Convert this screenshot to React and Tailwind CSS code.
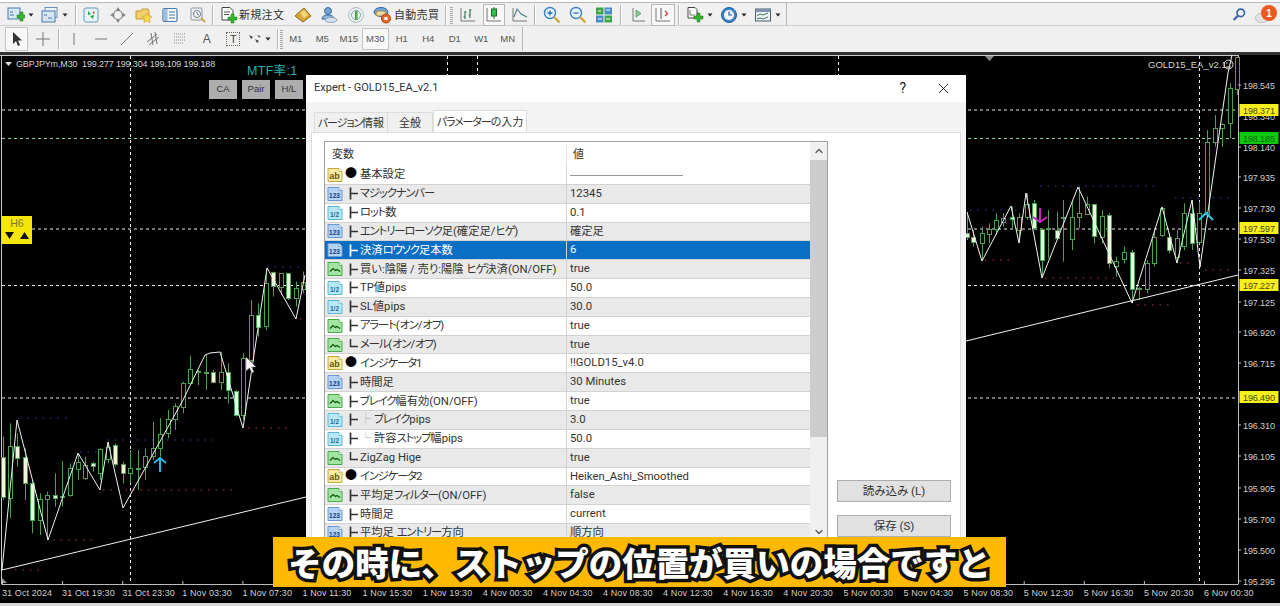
import React from 'react';
import { X, ChevronUp, ChevronDown } from 'lucide-react';

// candle rows: x, wick top, wick bottom, body top, body bottom, filled (zoomed coords, 3x)
const leftCandles = [
  [8, 710, 900, 770, 890, 1], [30, 670, 955, 737, 892, 0], [52, 700, 800, 738, 775, 1], [75, 745, 900, 772, 850, 1],
  [97, 840, 1000, 850, 962, 1], [120, 880, 1005, 897, 960, 0], [142, 875, 1020, 886, 898, 0], [165, 820, 920, 885, 893, 1],
  [187, 783, 920, 888, 892, 1], [210, 790, 890, 805, 885, 0], [233, 760, 840, 785, 805, 0], [256, 770, 840, 795, 835, 0],
  [278, 785, 815, 790, 798, 1], [300, 745, 840, 747, 820, 0], [323, 725, 790, 740, 775, 0], [346, 730, 800, 735, 793, 1],
  [368, 785, 850, 793, 820, 1], [390, 750, 850, 805, 820, 0], [413, 750, 870, 803, 806, 0], [436, 745, 840, 767, 800, 0],
  [458, 665, 780, 745, 768, 0], [481, 655, 770, 703, 745, 0], [503, 630, 715, 657, 700, 0], [526, 610, 690, 617, 657, 0],
  [549, 545, 640, 548, 620, 0], [571, 467, 550, 508, 550, 0], [594, 510, 555, 512, 516, 0], [617, 465, 570, 515, 517, 0],
  [640, 510, 550, 515, 545, 1], [662, 455, 570, 517, 547, 0], [685, 490, 610, 517, 572, 1], [708, 570, 650, 573, 645, 1],
  [730, 460, 660, 475, 645, 0], [753, 300, 490, 345, 480, 0], [775, 310, 410, 345, 380, 1], [798, 205, 390, 250, 380, 0],
  [820, 215, 290, 217, 260, 1], [843, 220, 285, 220, 262, 0], [865, 220, 300, 220, 295, 1], [888, 245, 320, 265, 295, 0],
  [910, 215, 280, 245, 265, 0],
];

const rightCandles = [
  [22, 490, 570, 548, 560, 1], [40, 540, 590, 562, 578, 1], [65, 530, 632, 550, 580, 0], [87, 520, 580, 538, 552, 0],
  [108, 490, 555, 510, 538, 0], [130, 490, 530, 503, 515, 0], [155, 470, 540, 502, 508, 1], [176, 490, 575, 500, 540, 0],
  [200, 430, 510, 462, 500, 0], [221, 450, 540, 460, 535, 1], [245, 535, 680, 538, 630, 1], [265, 480, 625, 535, 536, 0],
  [290, 485, 570, 540, 565, 1], [310, 450, 635, 500, 502, 0], [335, 450, 600, 500, 565, 0], [357, 410, 535, 490, 503, 0],
  [380, 440, 495, 463, 493, 0], [403, 465, 580, 463, 558, 1], [425, 480, 580, 497, 560, 0], [448, 490, 655, 495, 640, 1],
  [468, 620, 680, 632, 648, 0], [492, 590, 640, 607, 628, 0], [515, 600, 760, 607, 718, 1], [538, 710, 750, 715, 717, 0],
  [560, 630, 730, 640, 717, 0], [583, 540, 650, 562, 640, 0], [605, 470, 560, 475, 555, 0], [628, 550, 610, 560, 600, 1],
  [650, 540, 640, 563, 620, 0], [673, 460, 600, 490, 590, 0], [695, 450, 600, 490, 580, 1], [718, 455, 580, 488, 575, 0],
  [741, 240, 500, 275, 490, 0], [764, 195, 290, 235, 278, 0], [787, 220, 290, 222, 235, 0], [809, 100, 265, 115, 220, 0],
  [830, 20, 135, 20, 115, 0],
];

const leftZig = '2,570 17,420 48,540 78,453 100,490 108,442 123,508 183,400 205,355 210,353 220,352 243,428 267,268 296,319 305,275';
const rightZig = '967,212 982,261 1011,206 1019,243 1026,193 1042,278 1078,187 1132,303 1162,207 1177,263 1192,200 1200,267 1228,73 1232,55';

const prices = [
  ['198.545', 85], ['198.340', 116], ['198.140', 147], ['197.935', 177], ['197.730', 208], ['197.530', 239],
  ['197.325', 270], ['197.125', 302], ['196.920', 332], ['196.715', 363], ['196.310', 425], ['196.105', 456],
  ['195.905', 488], ['195.700', 519], ['195.500', 550], ['195.295', 581],
];

const priceTags = [
  ['198.371', 110, '#f7ee1e'], ['198.185', 138, '#10c810'], ['197.597', 228, '#f7ee1e'], ['197.227', 285, '#f7ee1e'], ['196.490', 397, '#f7ee1e'],
];

const times = [
  '31 Oct 2024', '31 Oct 19:30', '31 Oct 23:30', '1 Nov 03:30', '1 Nov 07:30', '1 Nov 11:30', '1 Nov 15:30', '1 Nov 19:30',
  '4 Nov 00:30', '4 Nov 04:30', '4 Nov 08:30', '4 Nov 12:30', '4 Nov 16:30', '4 Nov 20:30', '5 Nov 00:30', '5 Nov 04:30',
  '5 Nov 08:30', '5 Nov 12:30', '5 Nov 16:30', '5 Nov 20:30', '6 Nov 00:30',
];

const navyDots = [[20, 70, 418], [107, 213, 440], [80, 100, 452], [267, 305, 267], [970, 1030, 210], [1040, 1155, 186], [1175, 1230, 198]];
const redDots = [[15, 42, 570], [53, 95, 540], [103, 237, 490], [248, 290, 428], [300, 305, 319], [985, 1012, 260], [1045, 1115, 278], [1137, 1170, 305], [1180, 1192, 263], [1205, 1235, 270]];

const rows = [
  ['ab', 'dot', '基本設定', '——————————'],
  ['int', 'mid', 'マジックナンバー', '12345'],
  ['dbl', 'mid', 'ロット数', '0.1'],
  ['int', 'mid', 'エントリーローソク足(確定足/ヒゲ)', '確定足'],
  ['int', 'mid', '決済ロウソク足本数', '6'],
  ['bool', 'mid', '買い:陰陽 / 売り:陽陰 ヒゲ決済(ON/OFF)', 'true'],
  ['dbl', 'mid', 'TP値pips', '50.0'],
  ['dbl', 'mid', 'SL値pips', '30.0'],
  ['bool', 'mid', 'アラート(オン/オフ)', 'true'],
  ['bool', 'end', 'メール(オン/オフ)', 'true'],
  ['ab', 'dot', 'インジケータ1', '!!GOLD15_v4.0'],
  ['int', 'mid', '時間足', '30 Minutes'],
  ['bool', 'mid', 'ブレイク幅有効(ON/OFF)', 'true'],
  ['dbl', 'mid', 'ブレイクpips', '3.0', '├'],
  ['dbl', 'mid', '許容ストップ幅pips', '50.0', '└'],
  ['bool', 'end', 'ZigZag Hige', 'true'],
  ['ab', 'dot', 'インジケータ2', 'Heiken_Ashi_Smoothed'],
  ['bool', 'mid', '平均足フィルター(ON/OFF)', 'false'],
  ['int', 'mid', '時間足', 'current'],
  ['int', 'mid', '平均足 エントリー方向', '順方向'],
];

const typeColors = {
  ab: ['#f8eca0', '#c2a84a', '#6a5410', 'ab'],
  int: ['#b4d2f2', '#6c9ad0', '#123e8c', '123'],
  dbl: ['#b6e8f6', '#62b4d4', '#1a6a9a', '1/2'],
  bool: ['#a4e4a4', '#4ea84e', '#0c5a0c', ''],
};

// the dialog's UI font sets katakana much narrower than its kanji
function Kana({ text }) {
  return text.split(/([\u30A0-\u30FF]+)/).map((part, i) => (
    i % 2 ? <span key={i} className="tracking-[-1.1px]">{part}</span> : part
  ));
}

function TypeIcon({ type }) {
  const [bg, line, ink, label] = typeColors[type];
  return (
    <svg width="16" height="16" viewBox="0 0 16 16" className="shrink-0">
      <path d="M1 1.500h11l3 3v10H1z" fill={bg} stroke={line} />
      <path d="M12 1.500v3h3" fill="#fff" stroke={line} strokeWidth="0.700" />
      {label ? (
        <text x="7.500" y="11.500" textAnchor="middle" fontSize={type === 'ab' ? 9 : 6.500} fontWeight="700" fontFamily="Liberation Sans" fill={ink}>{label}</text>
      ) : (
        <path d="M3 10.500l3-3 2.500 2 1.500-1 3 2" fill="none" stroke={ink} strokeWidth="1.300" />
      )}
    </svg>
  );
}

function Arrow() {
  return (
    <svg width="10" height="8" viewBox="0 0 10 8" className="shrink-0">
      <path d="M2.500 2.500h5L5 5.500z" fill="#222" />
    </svg>
  );
}

const Sep = ({ className = '' }) => <div className={`w-[2px] h-[20px] bg-[#b4b4b4] border-r border-white shrink-0 ${className}`} />;

function Slot({ className = '', children }) {
  return <div className={`w-[20px] h-[20px] flex items-center justify-center shrink-0 ${className}`}>{children}</div>;
}

function Ic({ children }) {
  return <svg width="18" height="18" viewBox="0 0 18 18" className="shrink-0">{children}</svg>;
}

const Plus = () => <path d="M10 9h3V6h3v3h2v3h-2v3h-3v-3h-3z" fill="#35b52e" stroke="#1b7a18" strokeWidth="0.500" />;

const icons = {
  newChart: <Ic><rect x="1" y="2" width="12" height="11" fill="#d8e8f6" stroke="#4a78a8" /><path d="M3 6h3M3 9h4" stroke="#4a78a8" /><Plus /></Ic>,
  profiles: <Ic><rect x="4" y="1.500" width="12" height="10" fill="#eaf2fa" stroke="#6c8fb2" /><rect x="1" y="5" width="13" height="11" fill="#d6e6f5" stroke="#4a78a8" /><path d="M3 9h3M7 12h4" stroke="#4a78a8" /></Ic>,
  market: <Ic><rect x="2" y="2" width="14" height="14" rx="2" fill="#e8f4fb" stroke="#5d98c4" /><path d="M6 5l3 3-3 1zM12 9l-1 4-3-3z" fill="#2aa535" /><path d="M11 5l2 2-2 1z" fill="#d83a2a" /></Ic>,
  cross: <Ic><path d="M9 1l2 3H7zM9 17l-2-3h4zM1 9l3-2v4zM17 9l-3 2V7z" fill="#8c8c8c" /><circle cx="9" cy="9" r="4.500" fill="none" stroke="#777" strokeWidth="1.200" /></Ic>,
  folder: <Ic><path d="M1 5h5l1-2h6l1 2v8H1z" fill="#f4cf6a" stroke="#c09a35" /><path d="M12 7l1.500 3 3.500.5-2.500 2.500.6 3.500-3.100-1.700-3.100 1.700.6-3.500L7 10.500l3.500-.5z" fill="#f8d94a" stroke="#c8a02a" strokeWidth="0.600" /></Ic>,
  nav: <Ic><rect x="2" y="2.500" width="14" height="13" rx="1.500" fill="#f2f7fc" stroke="#4a78a8" strokeWidth="1.200" /><rect x="2.500" y="3" width="4" height="12" fill="#9cc0e4" /><path d="M8 6h6M8 9h6M8 12h6" stroke="#4a78a8" /></Ic>,
  tester: <Ic><rect x="2" y="2" width="11" height="12" rx="1" fill="#eef1f4" stroke="#8a94a0" /><circle cx="8" cy="8" r="3.500" fill="#fff" stroke="#6c7884" /><path d="M8 6v2l2 1" stroke="#6c7884" fill="none" /><path d="M12 12l4 4" stroke="#c8a64a" strokeWidth="2" /></Ic>,
  order: <Ic><path d="M2 1.500h8l3 3V14H2z" fill="#fff" stroke="#444" /><path d="M4 6h6M4 8.500h5" stroke="#555" /><path d="M8 11h3V8h3v3h3v3h-3v3h-3v-3H8z" fill="#35b52e" stroke="#1b7a18" strokeWidth="0.500" /></Ic>,
  gold: <Ic><path d="M1 10l9-8 7 8-8 6z" fill="#d8a93a" stroke="#8c6a18" /><path d="M6 7l4-3 4 5-4 3z" fill="#f3d77a" /></Ic>,
  people: <Ic><circle cx="8" cy="5" r="3.500" fill="#6fa4d8" stroke="#34689c" /><path d="M2 13c0-3 3-4 6-4s6 1 6 4z" fill="#8ab8e2" stroke="#34689c" /><ellipse cx="11" cy="14" rx="6" ry="2.500" fill="#d5e2ee" stroke="#8ea4b8" /></Ic>,
  signal: <Ic><circle cx="9" cy="9" r="7.500" fill="#eef3ee" stroke="#b0bcc0" /><circle cx="9" cy="9" r="4.500" fill="none" stroke="#7fa4c0" /><rect x="8" y="5" width="2.500" height="9" fill="#4aa84a" /></Ic>,
  auto: <Ic><ellipse cx="8" cy="6" rx="7" ry="4.500" fill="#6ea6d8" stroke="#34689c" /><rect x="3" y="5" width="10" height="5" rx="2" fill="#e8d8a8" stroke="#9a8648" /><circle cx="13" cy="12.500" r="4.500" fill="#e8662a" stroke="#a83e10" /><circle cx="13" cy="12.500" r="1.800" fill="#fff" /></Ic>,
  bars: <Ic><path d="M2 2v13h14" fill="none" stroke="#777" /><path d="M6 5v8M4.500 11H6M6 6h1.500M11 3v9M9.500 9H11M11 4h1.500" stroke="#3a7a5a" strokeWidth="1.200" fill="none" /></Ic>,
  candles: <Ic><path d="M2 2v13h14" fill="none" stroke="#777" /><path d="M9 1v12" stroke="#2a7a3a" /><rect x="6.500" y="3" width="5" height="7" fill="#35c04a" stroke="#1c6a2c" /></Ic>,
  line: <Ic><path d="M2 2v13h14" fill="none" stroke="#777" /><path d="M3 11l3-8 4 5 6 3" fill="none" stroke="#4a7a8c" strokeWidth="1.100" /></Ic>,
  zoomIn: <Ic><circle cx="7" cy="7" r="5.500" fill="#e4f2fc" stroke="#3a82c4" strokeWidth="1.400" /><path d="M4.500 7h5M7 4.500v5" stroke="#2a6ab0" strokeWidth="1.300" /><path d="M11 11l5.500 5.500" stroke="#d0a83a" strokeWidth="2.400" /></Ic>,
  zoomOut: <Ic><circle cx="7" cy="7" r="5.500" fill="#e4f2fc" stroke="#3a82c4" strokeWidth="1.400" /><path d="M4.500 7h5" stroke="#2a6ab0" strokeWidth="1.300" /><path d="M11 11l5.500 5.500" stroke="#d0a83a" strokeWidth="2.400" /></Ic>,
  grid: <Ic><rect x="1" y="1.500" width="7.500" height="7" fill="#3ea64a" /><rect x="9.500" y="1.500" width="7.500" height="7" fill="#4a8cc8" /><rect x="1" y="9.500" width="7.500" height="7" fill="#4a8cc8" /><rect x="9.500" y="9.500" width="7.500" height="7" fill="#3ea64a" /><path d="M3 5h3M11 4h4M3 13h4M11 13h4" stroke="#fff" /></Ic>,
  shift: <Ic><path d="M4 2v13h12" fill="none" stroke="#777" /><path d="M7 4l5 3.500L7 11z" fill="#8ccf98" stroke="#3a8a4a" strokeWidth="0.700" /></Ic>,
  scroll: <Ic><path d="M2 2v13h14" fill="none" stroke="#777" /><path d="M7 2v11" stroke="#555" /><path d="M11 5l2.500 2.500L11 10" fill="none" stroke="#d83a3a" strokeWidth="1.200" /></Ic>,
  addChart: <Ic><path d="M2 1.500h7l2 2V12H2z" fill="#fff" stroke="#444" /><path d="M4 4v5h5" fill="none" stroke="#777" /><path d="M8 10h3V7h3v3h3v3h-3v3h-3v-3H8z" fill="#35b52e" stroke="#1b7a18" strokeWidth="0.500" /></Ic>,
  clock: <Ic><circle cx="9" cy="9" r="7.500" fill="#3c86c8" stroke="#1e5a98" /><circle cx="9" cy="9" r="5" fill="#f2f6fa" /><path d="M9 5.500V9h3" fill="none" stroke="#1e5a98" strokeWidth="1.200" /></Ic>,
  template: <Ic><rect x="1.500" y="3" width="15" height="12" fill="#eef2f6" stroke="#4a5a6c" /><rect x="1.500" y="3" width="15" height="3" fill="#7a92aa" /><path d="M3 10l3-2 3 1 5-2M3 13l3-1 3 1 5-2" fill="none" stroke="#3a7a5a" /></Ic>,
};

function DrawIcon({ d, children }) {
  return (
    <svg width="16" height="16" viewBox="0 0 16 16" className="shrink-0">
      {d && <path d={d} fill="none" stroke="#777" />}
      {children}
    </svg>
  );
}

function Toolbars() {
  return (
    <div className="shrink-0 h-[52px] bg-[#f0f0f0] font-['Noto_Sans_CJK_JP',sans-serif] text-[#333] relative">
      <div className="h-[3px] border-b border-[#b8b8b8] bg-white" />
      <div className="flex items-center h-[23px] pt-[1px] pl-[6px] border-b border-[#cfcfcf]">
        <Slot>{icons.newChart}</Slot><div className="w-[10px] flex"><Arrow /></div>
        <Slot className="ml-[4px]">{icons.profiles}</Slot><div className="w-[10px] flex"><Arrow /></div>
        <Sep className="ml-[5px]" />
        <Slot className="ml-[4px]">{icons.market}</Slot>
        <Slot className="ml-[7px]">{icons.cross}</Slot>
        <Slot className="ml-[6px]">{icons.folder}</Slot>
        <Slot className="ml-[6px]">{icons.nav}</Slot>
        <Slot className="ml-[8px]">{icons.tester}</Slot>
        <Sep className="ml-[4px]" />
        <Slot className="ml-[5px]">{icons.order}</Slot>
        <div className="w-[45px] text-[11px] tracking-[0.3px] whitespace-nowrap">新規注文</div>
        <Slot className="ml-[9px]">{icons.gold}</Slot>
        <Slot className="ml-[6px]">{icons.people}</Slot>
        <Slot className="ml-[7px]">{icons.signal}</Slot>
        <Slot className="ml-[6px]">{icons.auto}</Slot>
        <div className="ml-[2px] w-[45px] text-[11px] tracking-[0.3px] whitespace-nowrap">自動売買</div>
        <Sep className="ml-[6px]" />
        <div className="ml-[3px] w-[3px] h-[18px] bg-[repeating-linear-gradient(0deg,#a8a8a8_0,#a8a8a8_1px,#f0f0f0_1px,#f0f0f0_2px)]" />
        <Slot className="ml-[5px]">{icons.bars}</Slot>
        <Slot className="ml-[5px] w-[22px] h-[22px] bg-[#f8f8f8] border border-[#b8b8b8]">{icons.candles}</Slot>
        <Slot className="ml-[5px]">{icons.line}</Slot>
        <Sep className="ml-[4px]" />
        <Slot className="ml-[6px]">{icons.zoomIn}</Slot>
        <Slot className="ml-[6px]">{icons.zoomOut}</Slot>
        <Slot className="ml-[6px]">{icons.grid}</Slot>
        <Sep className="ml-[6px]" />
        <Slot className="ml-[6px]">{icons.shift}</Slot>
        <Slot className="ml-[3px] w-[24px] h-[22px] bg-[#f8f8f8] border border-[#b8b8b8]">{icons.scroll}</Slot>
        <Sep className="ml-[3px]" />
        <Slot className="ml-[5px]">{icons.addChart}</Slot><div className="w-[10px] flex"><Arrow /></div>
        <Slot className="ml-[4px]">{icons.clock}</Slot><div className="w-[10px] flex"><Arrow /></div>
        <Slot className="ml-[4px]">{icons.template}</Slot><div className="w-[10px] flex"><Arrow /></div>
        <div className="ml-[3px] w-[1px] h-[23px] bg-[#b8b8b8]" />
      </div>
      <div className="flex items-center h-[26px] pl-[5px] font-['Liberation_Sans',sans-serif] text-[9.5px] text-[#555]">
        <div className="w-[23px] h-[24px] bg-[#f8f8f8] border border-[#c4c4c4] flex items-center justify-center">
          <svg width="12" height="16" viewBox="0 0 12 16"><path d="M2 1v12l3-3 2 5 2-1-2-4.500h4z" fill="#333" /></svg>
        </div>
        <div className="ml-[2px] w-[26px] flex justify-center"><DrawIcon d="M8 1v14M1 8h14" /></div>
        <Sep className="ml-[2px]" />
        <div className="w-[1px]" />
        <div className="w-[26.500px] flex justify-center"><DrawIcon d="M8 2v12" /></div>
        <div className="w-[26.500px] flex justify-center"><DrawIcon d="M2 8h12" /></div>
        <div className="w-[26.500px] flex justify-center"><DrawIcon d="M2 14L14 2" /></div>
        <div className="w-[26.500px] flex justify-center">
          <DrawIcon d="M1 11L11 3M3 14L13 6M5 2l2 12M9 1l2 12" />
        </div>
        <div className="w-[26.500px] flex justify-center">
          <DrawIcon><path d="M2 3h12M2 6h12M2 9h12M2 12h10" stroke="#888" strokeDasharray="1 1" /></DrawIcon>
        </div>
        <div className="w-[26.500px] flex justify-center font-['Liberation_Sans'] text-[12px] text-[#555]">A</div>
        <div className="w-[26.500px] flex justify-center">
          <div className="w-[14px] h-[14px] border border-dotted border-[#666] flex items-center justify-center text-[11px] text-[#444]">T</div>
        </div>
        <div className="w-[16px] flex justify-center">
          <DrawIcon><path d="M2 4l4 2-2 2zM8 8l4 2-2 2z" fill="#444" /><path d="M10 4l4 1-2 2z" fill="#777" /></DrawIcon>
        </div>
        <div className="w-[10px] flex"><Arrow /></div>
        <div className="w-[4px]" />
        <Sep />
        <div className="ml-[1px] w-[3px] h-[20px] bg-[repeating-linear-gradient(0deg,#a8a8a8_0,#a8a8a8_1px,#f0f0f0_1px,#f0f0f0_2px)]" />
        {['M1', 'M5', 'M15', 'M30', 'H1', 'H4', 'D1', 'W1', 'MN'].map((tf) => (
          <div key={tf} className={`w-[26.500px] h-[22px] flex items-center justify-center ${tf === 'M30' ? 'bg-[#f8f8f8] border border-[#c4c4c4]' : ''}`}>{tf}</div>
        ))}
        <div className="ml-[1px] w-[1px] h-[24px] bg-[#b8b8b8]" />
      </div>
      {/* search and notification, top right */}
      <svg width="15" height="15" viewBox="0 0 18 18" className="absolute left-[1232px] top-[7px]">
        <circle cx="10.500" cy="7" r="4.500" fill="#eef5fc" stroke="#3a64a8" strokeWidth="2" />
        <path d="M7 10.500l-5 5" stroke="#3a64a8" strokeWidth="2.600" />
      </svg>
      <div className="absolute left-[1255px] top-[13px] w-[14px] h-[10px] rounded-full bg-[#e2e2e2] border border-[#c4c4c4]" />
      <div className="absolute left-[1261px] top-[5px] w-[16px] h-[16px] rounded-full bg-[#e85a20] text-white text-[10px] font-bold flex items-center justify-center font-['Liberation_Sans']">1</div>
    </div>
  );
}

function Candles({ data, ox, oy }) {
  return data.map(([x, wt, wb, bt, bb, filled]) => {
    const cx = Math.round(ox + x / 3) + 0.5;
    const top = Math.round(oy + bt / 3) + 0.5;
    const h = Math.max(1, Math.round((bb - bt) / 3));
    return (
      <g key={x} stroke="#4f9f52">
        <line x1={cx} x2={cx} y1={oy + wt / 3} y2={oy + wb / 3} />
        <rect x={cx - 2} y={top} width="4" height={h} fill={filled ? '#e6fbdc' : '#000'} />
      </g>
    );
  });
}

function ChartSvg() {
  const font = 'Liberation Sans, sans-serif';
  return (
    <svg width="1280" height="548" viewBox="0 55 1280 548" className="block absolute inset-0">
      <rect x="0" y="55" width="1280" height="548" fill="#000" />
      <path d="M1.500 55v529M0 55.500h1238" stroke="#c8c8c8" fill="none" />
      <path d="M1238.500 55v529M1.500 584.500h1237" stroke="#bdbdbd" fill="none" />

      {[110, 229, 285.500, 398].map((y) => (
        <line key={y} x1="2" x2="1238" y1={y} y2={y} stroke="#e8e8e8" strokeDasharray="3 3" />
      ))}
      <line x1="2" x2="1238" y1="138.500" y2="138.500" stroke="#9ad09a" strokeDasharray="3 3" />
      {[130.500, 447.500, 477.500, 838.500, 1199.500].map((x) => (
        <line key={x} x1={x} x2={x} y1="56" y2="584" stroke="#eee" strokeDasharray="3 3" />
      ))}

      {navyDots.map(([a, b, y]) => (
        <line key={`n${a}`} x1={a} x2={b} y1={y} y2={y} stroke="#1c2a78" strokeWidth="1.500" strokeDasharray="1.500 6" />
      ))}
      {redDots.map(([a, b, y]) => (
        <line key={`r${a}`} x1={a} x2={b} y1={y} y2={y} stroke="#7c2424" strokeWidth="1.500" strokeDasharray="1.500 6" />
      ))}

      <Candles data={leftCandles} ox={0} oy={200} />
      <Candles data={rightCandles} ox={960} oy={50} />

      <polyline points={leftZig} fill="none" stroke="#f2f2f2" />
      <polyline points={rightZig} fill="none" stroke="#f2f2f2" />
      <line x1="2" y1="570" x2="306" y2="497" stroke="#f0f0f0" />
      <line x1="966" y1="341" x2="1238" y2="275" stroke="#f0f0f0" />

      <path d="M160 472v-14M154 463l6-5 6 5" fill="none" stroke="#29b6e8" strokeWidth="2" />
      <path d="M1040 208v14M1033 217l7 5 7-5" fill="none" stroke="#d020c0" strokeWidth="2" />
      <path d="M1199 220l7-7 7 7" fill="none" stroke="#29c8e8" strokeWidth="2" />
      <path d="M246 357v14l3.500-3 2.500 5 2-1-2.500-5h4.500z" fill="#fff" stroke="#555" strokeWidth="0.500" />

      <path d="M5 62h7l-3.500 4z" fill="#ddd" />
      <path d="M985 56h9l-4.500 5z" fill="#8c8c8c" />
      <path d="M2 583v-5l5 5z" fill="#999" />
      <text x="16" y="66.500" fontFamily={font} fontSize="9" letterSpacing="-0.150" fill="#d4d4d4" xmlSpace="preserve">GBPJPYm,M30  199.277 199.304 199.109 199.188</text>
      <text x="1148" y="67.500" fontFamily={font} fontSize="9.500" fill="#d4d4d4">GOLD15_EA_v2.1</text>
      <circle cx="1228.500" cy="64.500" r="4.500" fill="none" stroke="#ddd" />
      <path d="M1226 63h1.500M1230 63h1.500M1226 67h5" stroke="#ddd" fill="none" />

      {prices.map(([p, y]) => (
        <g key={p}>
          <line x1="1238" x2="1241" y1={y} y2={y} stroke="#bdbdbd" />
          <text x="1243" y={y + 3.500} fontFamily={font} fontSize="9" letterSpacing="-0.100" fill="#cfcfcf">{p}</text>
        </g>
      ))}
      {priceTags.map(([p, y, bg]) => (
        <g key={p}>
          <rect x="1239.500" y={y - 6} width="39" height="12" fill={bg} />
          <text x="1243" y={y + 3.500} fontFamily={font} fontSize="9" letterSpacing="-0.100" fill={bg === '#10c810' ? '#0a6a0a' : '#4a4a10'}>{p}</text>
        </g>
      ))}
      {times.map((t, i) => (
        <g key={t}>
          <line x1={2.500 + i * 60.100} x2={2.500 + i * 60.100} y1="581" y2="585" stroke="#bdbdbd" />
          <text x={2 + i * 60.100} y="595.500" fontFamily={font} fontSize="9" letterSpacing="0.100" fill="#cfcfcf">{t}</text>
        </g>
      ))}
    </svg>
  );
}

function ParamRow({ row, index }) {
  const [type, kind, name, value, sub] = row;
  const selected = index === 4;
  const striped = index % 2 === 1;
  const cellBg = selected ? 'bg-[#0a6fc4] text-white' : striped ? 'bg-[#e9e9e9]' : 'bg-white';
  return (
    <div className={`flex h-[18.850px] border-b border-[#d2d2d2] text-[11.300px] leading-[17px] ${cellBg}`}>
      <div className="w-[242px] flex items-center pl-[2px] whitespace-nowrap overflow-hidden border-r border-[#d2d2d2]">
        <TypeIcon type={type} />
        {kind === 'dot' ? (
          <span className="w-[15px] ml-[2px] text-[12px] text-black">●</span>
        ) : (
          <svg width="15" height="15" viewBox="0 0 15 15" className={`shrink-0 ml-[2px] ${selected ? 'text-white' : 'text-[#333]'}`}>
            {kind === 'mid'
              ? <path d="M5.500 1.500v12M5.500 7.500H13" stroke="currentColor" strokeWidth="1.700" />
              : <path d="M5.500 2v7.500H13" fill="none" stroke="currentColor" strokeWidth="1.500" />}
          </svg>
        )}
        {sub && <span className="w-[14px] text-[#aaa]">{sub}</span>}
        <span><Kana text={name} /></span>
      </div>
      <div className="flex-1 pl-[3px] whitespace-nowrap overflow-hidden">
        {value.startsWith('——') ? <div className="mt-[9px] w-[113px] h-[1px] bg-[#999]" /> : value}
      </div>
    </div>
  );
}

function Dialog() {
  return (
    <div className="absolute left-[306px] top-[20px] w-[660px] h-[512px] bg-[#f3f3f3] overflow-hidden font-['Roboto','Noto_Sans_CJK_JP',sans-serif] text-[#333] [font-feature-settings:'palt']">
      <div className="h-[27px] bg-white flex items-center justify-between pl-[8px] pr-[14px] text-[11px]">
        <span>Expert - GOLD15_EA_v2.1</span>
        <div className="flex items-center gap-[29px]">
          <span className="text-[14px] text-[#222]">?</span>
          <X size={17} strokeWidth={1.300} className="text-[#222]" />
        </div>
      </div>
      <div className="flex items-end h-[30px] pl-[8px] text-[11px]">
        <div className="w-[74px] h-[20px] pt-[3px] bg-[#f0f0f0] border border-b-0 border-[#dcdcdc] flex items-center justify-center whitespace-nowrap"><span><Kana text="バージョン情報" /></span></div>
        <div className="w-[45px] h-[20px] pt-[3px] bg-[#f0f0f0] border border-l-0 border-b-0 border-[#dcdcdc] flex items-center justify-center">全般</div>
        <div className="w-[94px] h-[22px] pt-[3px] bg-white border border-b-0 border-[#dcdcdc] flex items-center justify-center whitespace-nowrap"><span><Kana text="パラメーターの入力" /></span></div>
      </div>
      <div className="ml-[5px] w-[650px] h-[460px] bg-white border border-[#dcdcdc] flex pt-[8px] pl-[12px]">
        <div className="w-[504px] h-[450px] border border-[#a0a0a0] border-b-0 flex">
          <div className="w-[485px] flex flex-col">
            <div className="flex h-[24px] pt-[2px] shrink-0 text-[11px] items-center">
              <div className="w-[242px] pl-[7px] h-full flex items-center border-r border-[#e4e4e4]">変数</div>
              <div className="pl-[6px]">値</div>
            </div>
            {rows.map((r, i) => <ParamRow key={`${r[2]}${i}`} row={r} index={i} />)}
          </div>
          <div className="flex-1 bg-[#f0f0f0] flex flex-col items-center">
            <ChevronUp size={12} strokeWidth={2.500} className="text-[#555] my-[3px]" />
            <div className="w-full h-[277px] bg-[#cdcdcd]" />
            <ChevronDown size={12} strokeWidth={2.500} className="text-[#555] mt-[89px]" />
          </div>
        </div>
        <div className="ml-[9px] pt-[339px] flex flex-col gap-[13px] w-[114px] text-[11.500px]">
          <div className="h-[22px] pt-[1px] bg-[#e1e1e1] border border-[#adadad] flex items-center justify-center">読み込み (L)</div>
          <div className="h-[22px] pt-[1px] bg-[#e1e1e1] border border-[#adadad] flex items-center justify-center">保存 (S)</div>
        </div>
      </div>
    </div>
  );
}

export default function App() {
  return (
    <div className="w-[1280px] h-[606px] overflow-hidden flex flex-col bg-[#f0f0f0]">
      <Toolbars />
      <div className="h-[3px] bg-[#333] shrink-0" />
      <div className="relative h-[548px] shrink-0">
        <ChartSvg />
        <div className="absolute left-[247px] top-[7px] text-[12.500px] tracking-[0.3px] text-[#2fb0b0] font-['Liberation_Sans','Noto_Sans_CJK_JP',sans-serif]">MTF率:1</div>
        <div className="absolute left-[209px] top-[25px] flex gap-[5px] font-['Liberation_Sans',sans-serif] text-[9.500px] text-[#333]">
          {['CA', 'Pair', 'H/L'].map((b) => (
            <div key={b} className="w-[28px] h-[19px] bg-[#adadad] flex items-center justify-center">{b}</div>
          ))}
        </div>
        <div className="absolute left-[2px] top-[161px] w-[30px] h-[28px] bg-[#f6e60a] flex flex-col items-center font-['Liberation_Sans',sans-serif] text-[10.500px] text-[#7a7a20]">
          <div className="leading-[15px]">H6</div>
          <svg width="26" height="9" viewBox="0 0 26 9">
            <path d="M1 1h9L5.500 8zM16 8h9l-4.500-7z" fill="#111" />
          </svg>
        </div>
        <Dialog />
        <div className="absolute left-[273px] top-[482px] w-[733px] h-[50px] bg-[#ffb900] flex items-center justify-center font-['Noto_Sans_CJK_JP',sans-serif] font-black text-[33.500px] text-white whitespace-nowrap [-webkit-text-stroke:7px_#111] [paint-order:stroke_fill]">
          その時に、ストップの位置が買いの場合ですと
        </div>
      </div>
      <div className="h-[3px] bg-[#d8d8d8] shrink-0" />
    </div>
  );
}
